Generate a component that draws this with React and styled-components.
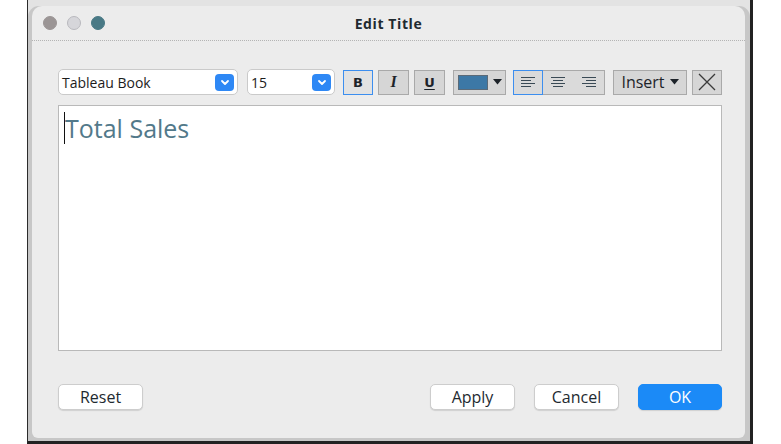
import React from "react";
import styled, { createGlobalStyle } from "styled-components";

const Global = createGlobalStyle`
  body {
    margin: 0;
    background: #ffffff;
    font-family: "Open Sans", "Liberation Sans", sans-serif;
  }
`;

const Page = styled.div`
  width: 781px;
  height: 444px;
  padding-left: 27px;
  box-sizing: border-box;
  background: #ffffff;
`;

const Frame = styled.div`
  width: 726px;
  height: 444px;
  box-sizing: border-box;
  border-left: 1px solid #2b2b2b;
  border-right: 3px solid #222222;
  border-bottom: 3px solid #222222;
  background: #e3e3e3;
  padding-top: 6px;
  display: flex;
`;

const Shell = styled.div`
  flex: 1;
  display: flex;
  background: #c7c7c7;
  padding: 0 5px 3px 4px;
  border-radius: 11px 11px 0 0;
`;

const Window = styled.div`
  flex: 1;
  display: flex;
  flex-direction: column;
  background: #ececec;
  border-radius: 10px 10px 6px 6px;
`;

const TitleBar = styled.div`
  height: 34px;
  position: relative;
  display: flex;
  align-items: center;
  padding-left: 11px;
  gap: 10px;
  border-bottom: 1px dotted #b4b4b4;
`;

const Light = styled.span`
  width: 14px;
  height: 14px;
  border-radius: 50%;
  box-sizing: border-box;
  background: ${(p) => p.$color};
  border: 1px solid ${(p) => p.$edge || p.$color};
`;

const Title = styled.div`
  position: absolute;
  left: 0;
  right: 0;
  text-align: center;
  font-size: 14px;
  font-weight: 700;
  color: #1f2a30;
  letter-spacing: 0.6px;
`;

const Body = styled.div`
  flex: 1;
  display: flex;
  flex-direction: column;
  padding: 28px 23px 0 26px;
`;

const Toolbar = styled.div`
  display: flex;
  align-items: center;
  height: 26px;
`;

const Select = styled.div`
  width: ${(p) => p.$w}px;
  margin-left: ${(p) => p.$ml || 0}px;
  height: 26px;
  box-sizing: border-box;
  background: #ffffff;
  border: 1px solid #cacaca;
  border-radius: 5px;
  display: flex;
  align-items: center;
  justify-content: space-between;
  padding: 0 3px 0 3px;
  font-size: 14px;
  color: #1c1c1c;
`;

const Chevron = styled.span`
  width: 19px;
  height: 17px;
  border-radius: 4px;
  background: #2e88f5;
  display: flex;
  align-items: center;
  justify-content: center;
`;

const ToolButton = styled.div`
  width: ${(p) => p.$w}px;
  margin-left: ${(p) => p.$ml || 0}px;
  height: 25px;
  box-sizing: border-box;
  background: ${(p) => (p.$active ? "#e2e2e2" : "#d6d6d6")};
  border: 1px solid ${(p) => (p.$active ? "#3c8eef" : "#a9a9a9")};
  display: flex;
  align-items: center;
  justify-content: center;
  gap: 5px;
  font-size: 13px;
  color: #1d2329;
`;

const Bold = styled.span`
  font-weight: 700;
  font-family: "DejaVu Sans", sans-serif;
  font-size: 13px;
`;

const Italic = styled.span`
  font-style: italic;
  font-family: "Liberation Serif", serif;
  font-size: 16px;
  font-weight: 700;
`;

const Under = styled.span`
  font-weight: 700;
  font-family: "DejaVu Sans", sans-serif;
  font-size: 13px;
  text-decoration: underline;
  text-underline-offset: 2px;
`;

const Swatch = styled.span`
  width: 30px;
  height: 15px;
  background: #3c78a6;
  border: 1px solid #5a6a78;
  box-sizing: border-box;
`;

const AlignGroup = styled.div`
  width: 92px;
  margin-left: ${(p) => p.$ml}px;
  height: 25px;
  box-sizing: border-box;
  background: #dadada;
  border: 1px solid #a9a9a9;
  display: flex;
`;

const AlignCell = styled.div`
  flex: 1;
  display: flex;
  align-items: center;
  justify-content: center;
  box-sizing: border-box;
  margin: -1px 0;
  border: 1px solid ${(p) => (p.$active ? "#3c8eef" : "transparent")};
  margin-left: ${(p) => (p.$active ? "-1px" : "0")};
`;

const InsertLabel = styled.span`
  font-size: 16px;
  color: #1d2329;
`;

const Editor = styled.div`
  margin-top: 10px;
  height: 246px;
  box-sizing: border-box;
  background: #ffffff;
  border: 1px solid #b9b9b9;
  padding: 6px 0 0 5px;
  display: flex;
  align-items: flex-start;
`;

const Caret = styled.span`
  width: 1px;
  height: 32px;
  background: #111;
`;

const EditorText = styled.span`
  font-size: 25px;
  line-height: 32px;
  color: #52798a;
`;

const Footer = styled.div`
  margin-top: 33px;
  display: flex;
  align-items: center;
`;

const Button = styled.div`
  width: ${(p) => p.$w}px;
  margin-left: ${(p) => p.$ml || 0}px;
  height: 26px;
  box-sizing: border-box;
  border-radius: 5px;
  background: ${(p) => (p.$primary ? "#1b8af7" : "#ffffff")};
  border: 1px solid ${(p) => (p.$primary ? "#1b8af7" : "#cdcdcd")};
  box-shadow: 0 1px 1px rgba(0, 0, 0, 0.12);
  color: ${(p) => (p.$primary ? "#ffffff" : "#1e2a30")};
  font-size: 16px;
  display: flex;
  align-items: center;
  justify-content: center;
`;

const Spacer = styled.div`
  flex: 1;
`;

function ChevronIcon() {
  return (
    <svg width="10" height="7" viewBox="0 0 10 7">
      <path d="M2 2 L5 5 L8 2" fill="none" stroke="#fff" strokeWidth="1.8" strokeLinecap="round" strokeLinejoin="round" />
    </svg>
  );
}

function Caret6() {
  return (
    <svg width="9" height="6" viewBox="0 0 9 6">
      <path d="M0 0 H9 L4.5 5.5 Z" fill="#1d2329" />
    </svg>
  );
}

function AlignIcon({ kind }) {
  const rows = [14, 10, 14, 10];
  const xs = rows.map((w) => (kind === "left" ? 1 : kind === "right" ? 15 - w : (16 - w) / 2));
  return (
    <svg width="16" height="12" viewBox="0 0 16 12">
      {rows.map((w, i) => (
        <rect key={i} x={xs[i]} y={1 + i * 3} width={w} height="1" fill="#3a4a55" />
      ))}
    </svg>
  );
}

function CrossIcon() {
  return (
    <svg width="20" height="20" viewBox="0 0 20 20">
      <path d="M2 2 L18 18 M18 2 L2 18" stroke="#3a3a3a" strokeWidth="1.3" />
    </svg>
  );
}

export default function App() {
  return (
    <Page>
      <Global />
      <Frame>
        <Shell>
          <Window>
            <TitleBar>
              <Light $color="#9b9595" />
              <Light $color="#d6d6da" $edge="#b9b9be" />
              <Light $color="#497985" />
              <Title>Edit Title</Title>
            </TitleBar>
            <Body>
              <Toolbar>
                <Select $w={180}>
                  Tableau Book
                  <Chevron>
                    <ChevronIcon />
                  </Chevron>
                </Select>
                <Select $w={88} $ml={9}>
                  15
                  <Chevron>
                    <ChevronIcon />
                  </Chevron>
                </Select>
                <ToolButton $w={30} $ml={8} $active>
                  <Bold>B</Bold>
                </ToolButton>
                <ToolButton $w={31} $ml={5}>
                  <Italic>I</Italic>
                </ToolButton>
                <ToolButton $w={31} $ml={5}>
                  <Under>U</Under>
                </ToolButton>
                <ToolButton $w={53} $ml={8}>
                  <Swatch />
                  <Caret6 />
                </ToolButton>
                <AlignGroup $ml={7}>
                  <AlignCell $active>
                    <AlignIcon kind="left" />
                  </AlignCell>
                  <AlignCell>
                    <AlignIcon kind="center" />
                  </AlignCell>
                  <AlignCell>
                    <AlignIcon kind="right" />
                  </AlignCell>
                </AlignGroup>
                <ToolButton $w={74} $ml={8}>
                  <InsertLabel>Insert</InsertLabel>
                  <Caret6 />
                </ToolButton>
                <ToolButton $w={30} $ml={5}>
                  <CrossIcon />
                </ToolButton>
              </Toolbar>
              <Editor>
                <Caret />
                <EditorText>Total Sales</EditorText>
              </Editor>
              <Footer>
                <Button $w={85}>Reset</Button>
                <Spacer />
                <Button $w={85}>Apply</Button>
                <Button $w={85} $ml={19}>Cancel</Button>
                <Button $w={84} $ml={19} $primary>OK</Button>
              </Footer>
            </Body>
          </Window>
        </Shell>
      </Frame>
    </Page>
  );
}
